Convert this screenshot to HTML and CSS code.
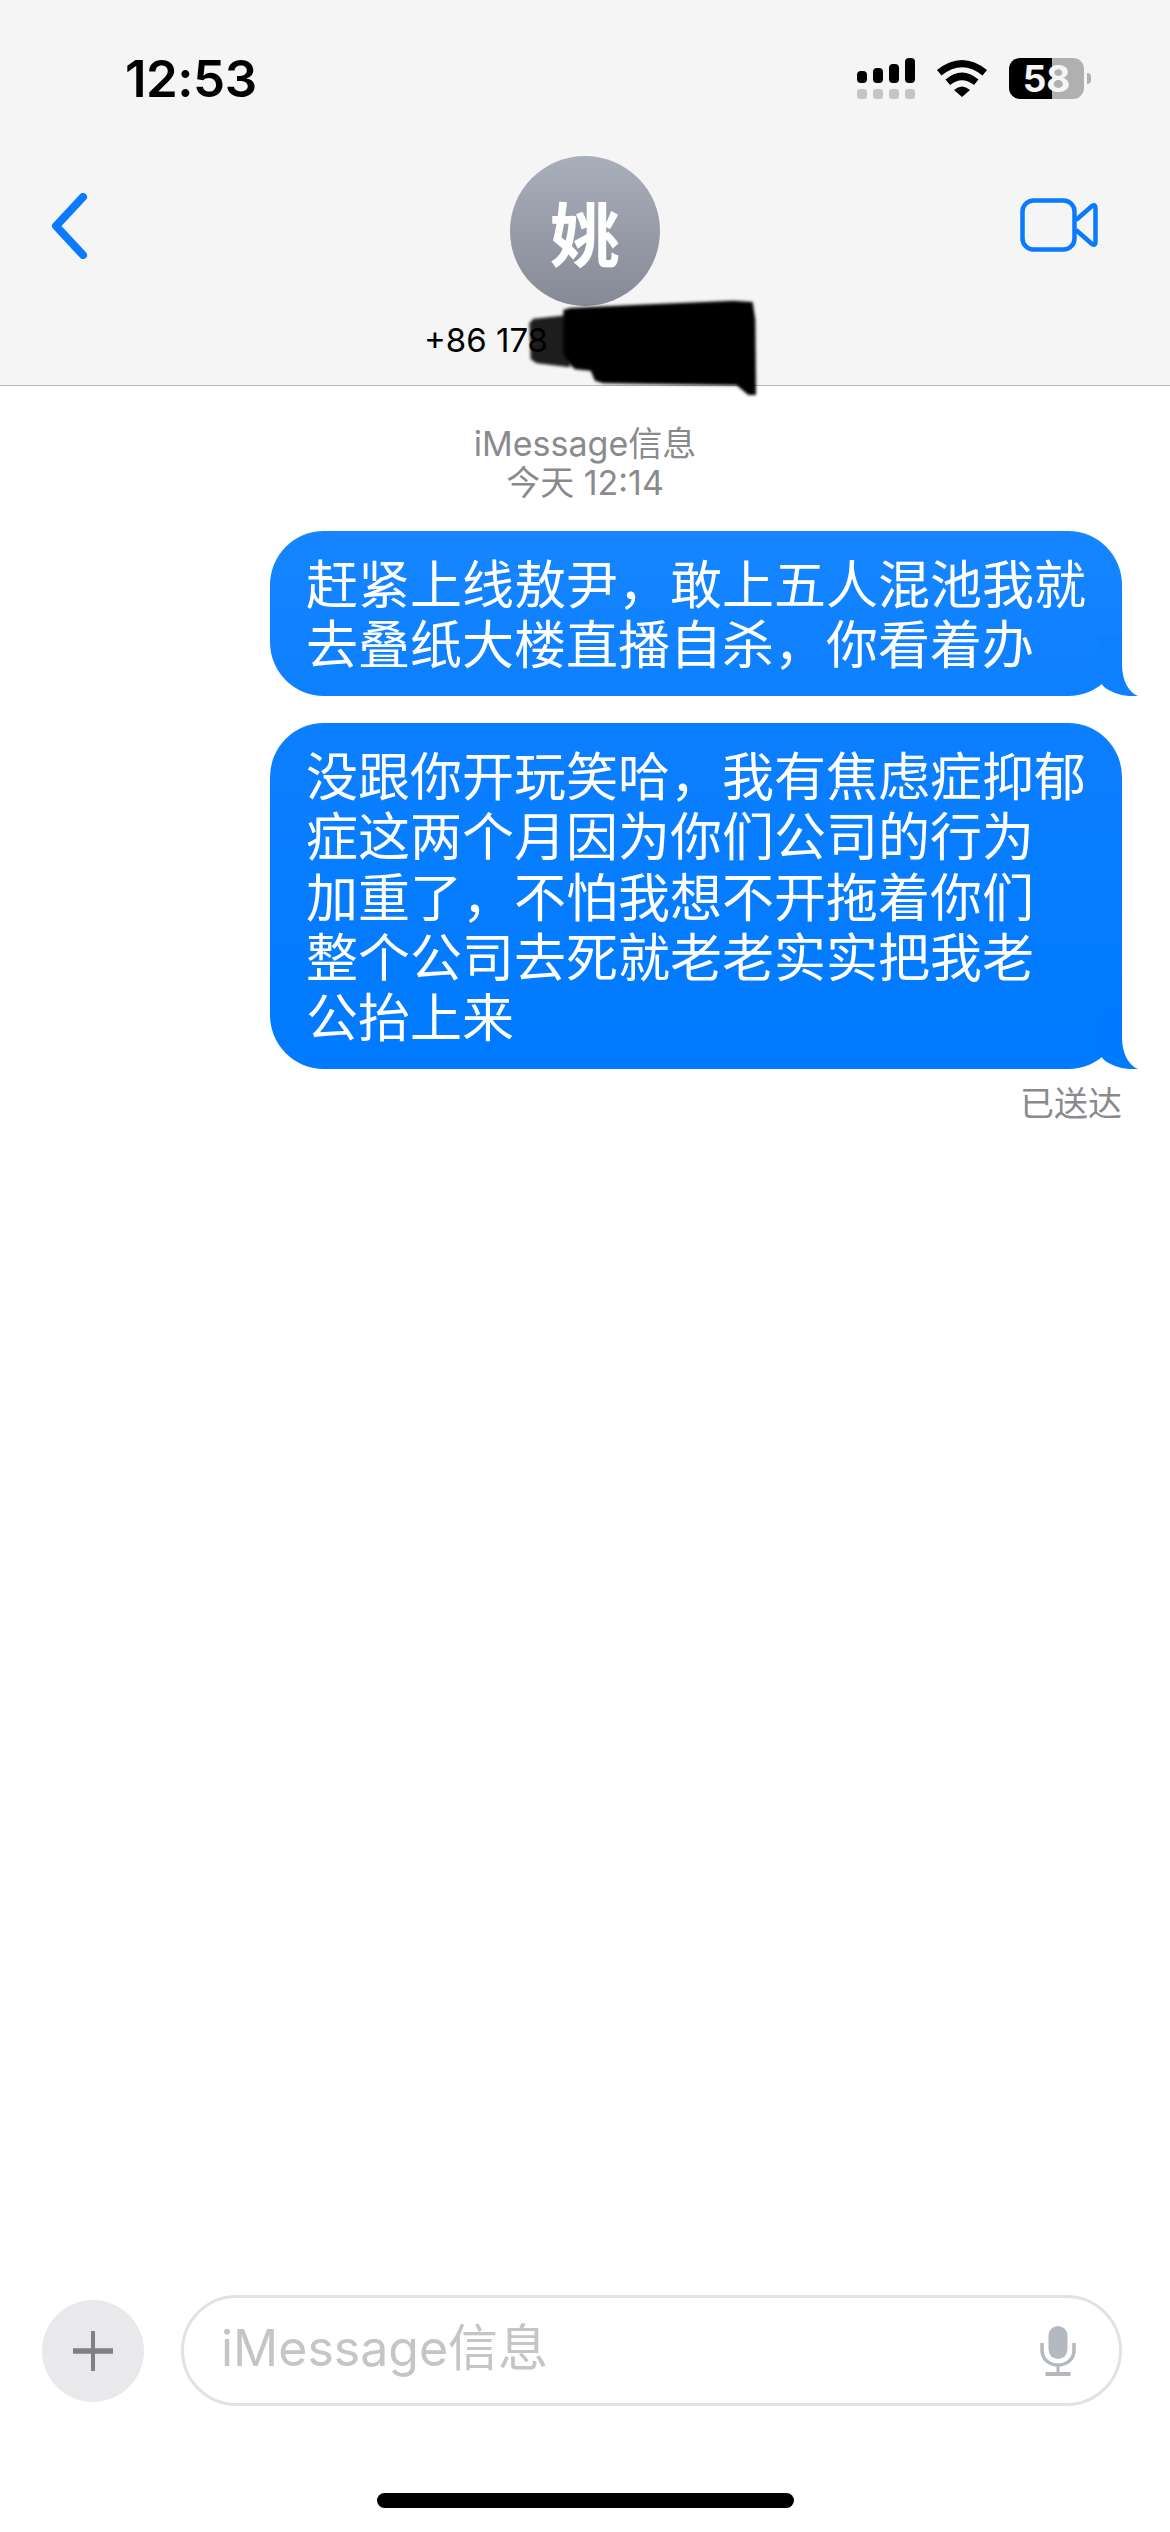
FILE: index.html
```html
<!DOCTYPE html>
<html lang="zh-CN">
<head>
    <meta charset="UTF-8">
    <meta name="viewport" content="width=device-width, initial-scale=1.0">
    <title>iMessage</title>
    <link rel="stylesheet" href="styles.css">
</head>
<body>

    <div class="app">
        <header class="header">
            <div class="status-bar">
                <span class="time">12:53</span>
                <div class="status-icons">
                    <div class="signal">
                        <div class="signal-bars">
                            <i class="bar bar-1"></i>
                            <i class="bar bar-2"></i>
                            <i class="bar bar-3"></i>
                            <i class="bar bar-4"></i>
                        </div>
                        <div class="signal-dots">
                            <i class="dot"></i>
                            <i class="dot"></i>
                            <i class="dot"></i>
                            <i class="dot"></i>
                        </div>
                    </div>
                    <svg class="wifi" width="50" height="37" viewBox="0 0 50 37">
                        <path d="M0 10 Q25 -10 50 10 L45.5 15.5 Q25 -1 4.5 15.5 Z"/>
                        <path d="M8.5 19.5 Q25 5.5 41.5 19.5 L37 25 Q25 15.5 13 25 Z"/>
                        <path d="M17 30 Q25 23 33 30 L25 37 Z"/>
                    </svg>
                    <div class="battery">
                        <span class="battery-level">58</span>
                    </div>
                    <i class="battery-nub"></i>
                </div>
            </div>

            <nav class="nav">
                <svg class="back" width="38" height="66" viewBox="0 0 38 66">
                    <path d="M33 4 L6 33 L33 62"/>
                </svg>
                <div class="contact">
                    <div class="avatar">姚</div>
                    <div class="phone">+86 178</div>
                </div>
                <svg class="video" width="78" height="54" viewBox="0 0 78 54">
                    <rect x="2.5" y="2.5" width="52" height="49" rx="11"/>
                    <path d="M56 22 L72 8 Q75.500 6 75.500 10 L75.500 44 Q75.500 48 72 46 L56 32"/>
                </svg>
            </nav>

            <svg class="scribble" width="400" height="130" viewBox="0 0 1200 390">
                <defs>
                    <filter id="soft"><feGaussianBlur stdDeviation="4"/></filter>
                </defs>
                <path class="scribble-edge" filter="url(#soft)" d="M400 116 L500 106 L510 262 L410 250 L392 238 L388 130 Z"/>
                <path class="scribble-main" filter="url(#soft)" d="M490 90 L510 84 L700 75 L1000 62 L1058 66 L1066 120 L1068 345 L1045 345 L1010 316 L610 310 L585 302 L572 272 L525 268 L505 250 L490 220 Z"/>
            </svg>
        </header>

        <main class="thread">
            <div class="service">iMessage信息<br>今天 12:14</div>

            <div class="bubble bubble-first">
                赶紧上线敖尹，敢上五人混池我就<br>去叠纸大楼直播自杀，你看着办
                <svg class="tail" width="40" height="60" viewBox="0 0 40 60">
                    <path d="M0 0 L24 0 L24 28 C24 44 30 56 40 60 C28 61 14 58 5 50 L0 40 Z"/>
                </svg>
            </div>

            <div class="bubble bubble-second">
                没跟你开玩笑哈，我有焦虑症抑郁<br>症这两个月因为你们公司的行为<br>加重了，不怕我想不开拖着你们<br>整个公司去死就老老实实把我老<br>公抬上来
                <svg class="tail" width="40" height="60" viewBox="0 0 40 60">
                    <path d="M0 0 L24 0 L24 28 C24 44 30 56 40 60 C28 61 14 58 5 50 L0 40 Z"/>
                </svg>
            </div>

            <div class="delivered">已送达</div>
        </main>

        <footer class="composer">
            <div class="composer-row">
                <div class="plus-btn">
                    <svg width="40" height="40" viewBox="0 0 40 40">
                        <path d="M20 1 V39" class="plus-v"/>
                        <path d="M1 20 H39" class="plus-h"/>
                    </svg>
                </div>
                <div class="input">
                    <span class="placeholder">iMessage信息</span>
                    <svg class="mic" width="36" height="50" viewBox="0 0 36 50">
                        <rect x="8.500" y="0" width="19" height="33" rx="9.500"/>
                        <path class="mic-cup" d="M2 17 V24 C2 44 34 44 34 24 V17"/>
                        <rect x="16.500" y="38" width="3" height="9"/>
                        <rect x="5.500" y="46" width="25" height="4"/>
                    </svg>
                </div>
            </div>
            <div class="home-bar"></div>
        </footer>
    </div>

</body>
</html>
```

FILE: styles.css
```css
* {
    box-sizing: border-box;
}

body {
    margin: 0;
    background: #ffffff;
    font-family: Inter, "Noto Sans CJK SC", sans-serif;
}

.app {
    width: 1170px;
    height: 2532px;
    display: flex;
    flex-direction: column;
    overflow: hidden;
}

/* header */
.header {
    position: relative;
    height: 386px;
    background: #f5f5f5;
    border-bottom: 1px solid #b4b4b4;
}

.status-bar {
    height: 156px;
    padding: 0 79px 0 125px;
    display: flex;
    align-items: center;
    justify-content: space-between;
}

.time {
    font-size: 51px;
    font-weight: 600;
    letter-spacing: -0.5px;
    color: #000;
}

.status-icons {
    display: flex;
    align-items: center;
}

.signal {
    display: flex;
    flex-direction: column;
    gap: 6px;
    margin-right: 22px;
}

.signal-bars, .signal-dots {
    display: flex;
    gap: 6px;
    align-items: flex-end;
}

.bar {
    width: 10px;
    background: #000;
    border-radius: 4px;
}

.bar-1 { height: 12px; }
.bar-2 { height: 15px; }
.bar-3 { height: 19px; }
.bar-4 { height: 25px; }

.dot {
    width: 10px;
    height: 10px;
    background: #c4c4c4;
    border-radius: 3px;
}

.wifi {
    fill: #000;
    margin-right: 22px;
}

.battery {
    width: 75px;
    height: 41px;
    border-radius: 11px;
    background: linear-gradient(to right, #000 43px, #b0b0b0 43px);
    display: flex;
    align-items: center;
    justify-content: center;
}

.battery-level {
    font-size: 37px;
    font-weight: 700;
    line-height: 41px;
    color: #f5f5f5;
}

.battery-nub {
    width: 4px;
    height: 11px;
    margin-left: 3px;
    background: #b0b0b0;
    border-radius: 0 6px 6px 0;
}

.nav {
    display: grid;
    grid-template-columns: 1fr auto 1fr;
    align-items: start;
    padding: 0 50px;
}

.back {
    margin-top: 37px;
    fill: none;
    stroke: #0a7aff;
    stroke-width: 8;
    stroke-linecap: round;
    stroke-linejoin: round;
}

.video {
    justify-self: end;
    margin-top: 42px;
    margin-right: 22px;
    fill: none;
    stroke: #0a7aff;
    stroke-width: 4.500;
    stroke-linejoin: round;
}

.contact {
    display: flex;
    flex-direction: column;
    align-items: center;
}

.avatar {
    width: 150px;
    height: 150px;
    border-radius: 50%;
    background: linear-gradient(#a9aebb, #868a96);
    color: #fff;
    font-size: 70px;
    font-weight: 700;
    display: flex;
    align-items: center;
    justify-content: center;
}

.phone {
    width: 322px;
    height: 68px;
    line-height: 68px;
    font-size: 33px;
    color: #000;
}

.scribble {
    position: absolute;
    left: 400px;
    top: 280px;
}

.scribble-main {
    fill: #000;
}

.scribble-edge {
    fill: #000;
    opacity: 0.88;
}

/* messages */
.thread {
    flex: 1;
    display: flex;
    flex-direction: column;
    align-items: flex-end;
    padding: 38px 48px 0;
}

.service {
    align-self: center;
    text-align: center;
    font-size: 34px;
    line-height: 39px;
    color: #8a8a8e;
    margin-bottom: 29px;
}

.bubble {
    position: relative;
    width: 852px;
    padding: 25px 36px 19px;
    border-radius: 54px;
    font-size: 52px;
    line-height: 60.400px;
    color: #fff;
    white-space: nowrap;
}

.bubble-first {
    background: linear-gradient(#1685ff, #0d80ff);
    fill: #0d80ff;
    margin-bottom: 27px;
}

.bubble-second {
    background: linear-gradient(#0c7fff, #007aff);
    fill: #007aff;
}

.tail {
    position: absolute;
    right: -16px;
    bottom: 0;
}

.delivered {
    margin-top: 15px;
    font-size: 34px;
    line-height: 40px;
    color: #8a8a8e;
}

/* composer */
.composer-row {
    display: flex;
    align-items: center;
    gap: 37px;
    padding: 0 48px 0 42px;
}

.plus-btn {
    width: 102px;
    height: 102px;
    flex: none;
    border-radius: 50%;
    background: #e9e9eb;
    display: flex;
    align-items: center;
    justify-content: center;
}

.plus-v, .plus-h {
    stroke: #7f7f84;
    stroke-linecap: round;
}

.plus-v {
    stroke-width: 4;
}

.plus-h {
    stroke-width: 5.500;
}

.input {
    flex: 1;
    height: 111px;
    padding: 0 43px 0 37px;
    border: 3px solid #e2e2e2;
    border-radius: 56px;
    display: flex;
    align-items: center;
    justify-content: space-between;
}

.placeholder {
    font-size: 50px;
    line-height: 60px;
    padding-bottom: 5px;
    color: #c5c5c7;
}

.mic {
    fill: #b4b8bf;
}

.mic-cup {
    fill: none;
    stroke: #b4b8bf;
    stroke-width: 3.500;
}

.home-bar {
    width: 417px;
    height: 15px;
    margin: 87px auto 24px;
    background: #000;
    border-radius: 8px;
}
```
